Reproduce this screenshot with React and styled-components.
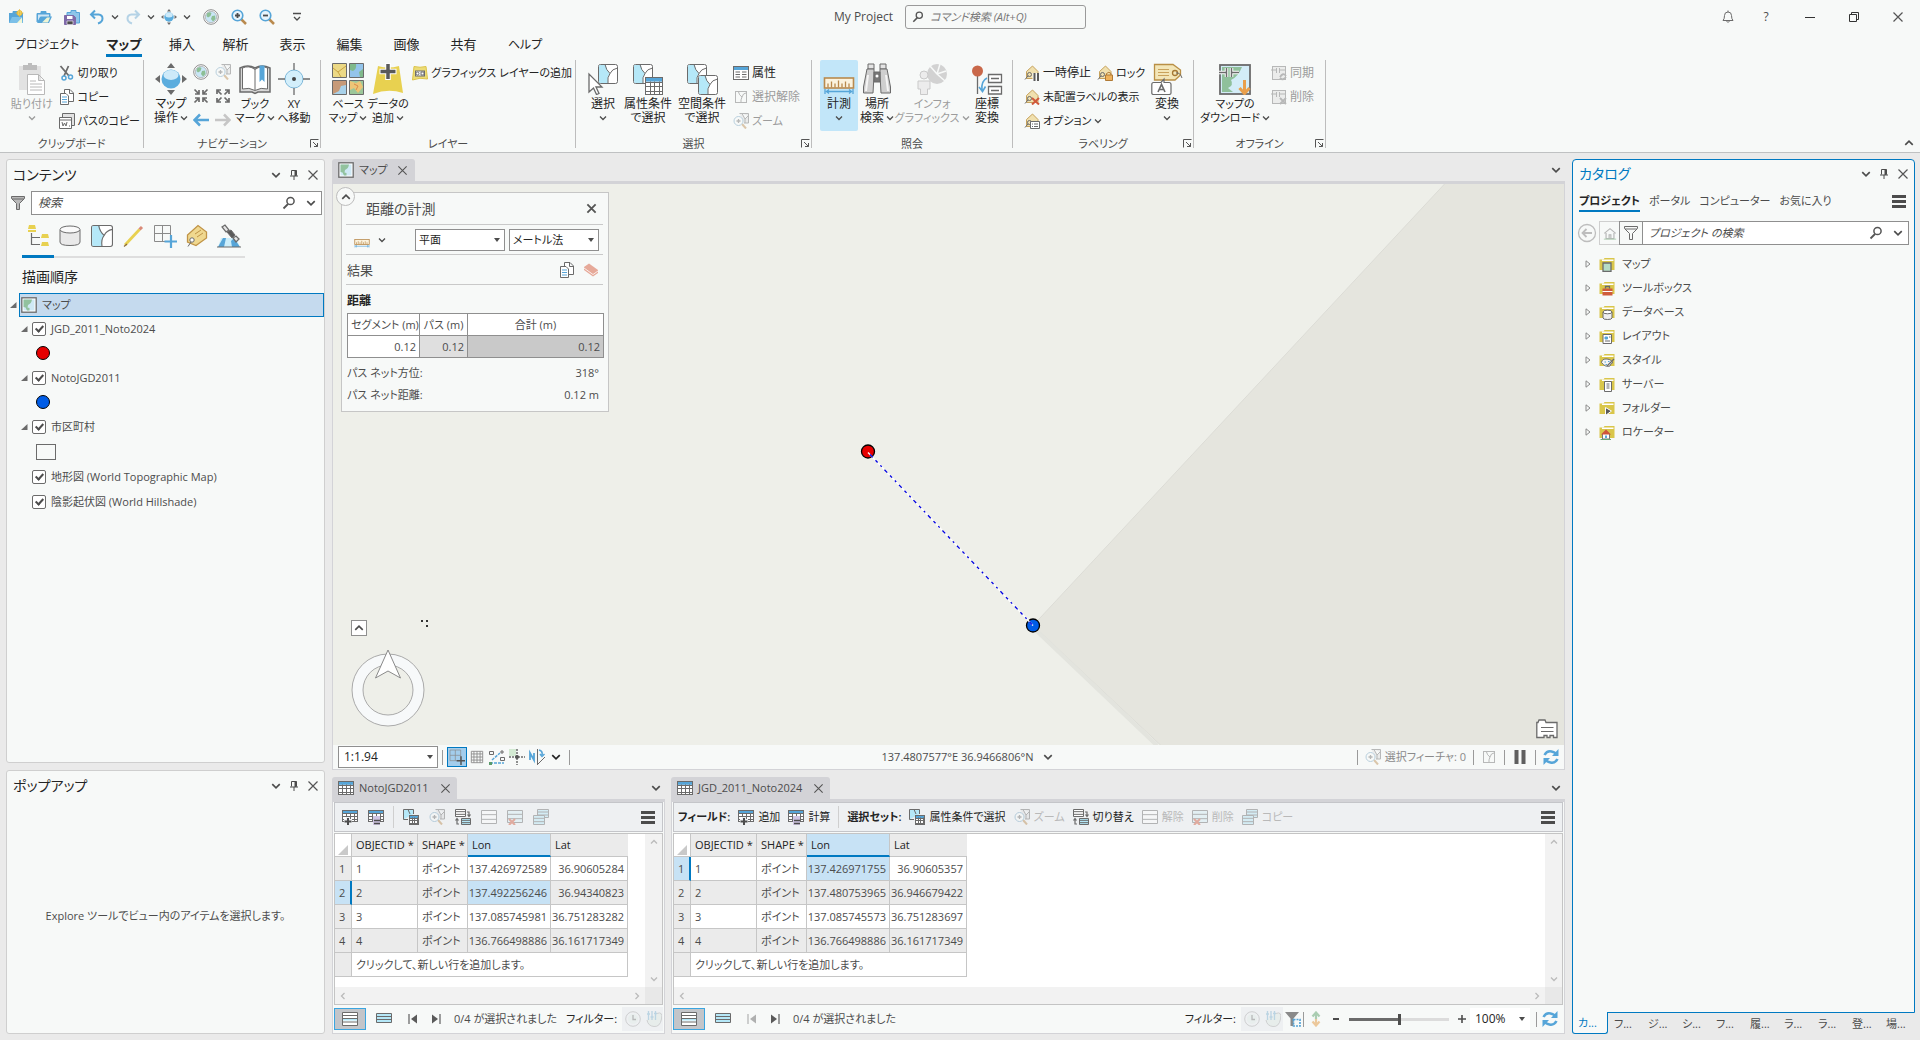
import React from "react";
import styled, { createGlobalStyle, css } from "styled-components";

const C = {
  face: "#f7f9f8",
  gutter: "#eaeaea",
  line: "#cfcfcf",
  tab: "#d3d3d7",
  text: "#4c4c4c",
  ink: "#242424",
  dim: "#9c9c9c",
  accent: "#0079c1",
  gray: "#6b6b6b",
  blue: "#56a5d8",
  cyan: "#b5e8f8",
  yellow: "#e8d150",
  tan: "#b98a4e",
};

const Global = createGlobalStyle`
  *, *::before, *::after { box-sizing: border-box; }
  body { margin: 0; background: ${C.gutter}; }
  body, button, input, select {
    font-family: "Open Sans", "Noto Sans CJK JP", sans-serif;
    font-size: 12px;
    line-height: 16px;
    font-feature-settings: "palt";
    color: ${C.text};
  }
  button { border: 0; background: none; padding: 0; white-space: nowrap; }
  h2, h3 { margin: 0; font-weight: 400; }
`;

/* ---------- icons ---------- */

const Svg = styled.svg`
  display: block;
  flex: none;
  fill: none;
  stroke: ${(p) => p.$c || C.gray};
  stroke-width: 1;
  opacity: ${(p) => (p.$dim ? 0.45 : 1)};
`;
const Ic = ({ s = 16, v = 16, c, dim, children }) => (
  <Svg width={s} height={s} viewBox={`0 0 ${v} ${v}`} $c={c} $dim={dim} aria-hidden="true">
    {children}
  </Svg>
);

const Chevron = ({ s = 8, c = "#4c4c4c", up }) => (
  <Ic s={s} v={8} c={c}>
    <path d={up ? "M1 5.5 4 2.5 7 5.5" : "M1 2.5 4 5.5 7 2.5"} strokeWidth="1.3" />
  </Ic>
);
const CloseX = ({ s = 12, w = 1.2 }) => (
  <Ic s={s} v={12} c="#555">
    <path d="M1.5 1.5 10.5 10.5M10.5 1.5 1.5 10.5" strokeWidth={w} />
  </Ic>
);
const Pin = () => (
  <Ic s={12} v={12} c="#4c4c4c">
    <path d="M3.5 6.5V1.5H8.5V6.5M2 7H10M6 7V11" />
    <path d="M7.5 1.5V7" strokeWidth="2" />
  </Ic>
);
const Lens = ({ s = 14 }) => (
  <Ic s={s} v={14} c="#555">
    <circle cx="8.5" cy="5" r="3.6" strokeWidth="1.5" />
    <path d="M6 8 1.5 12.5" strokeWidth="1.8" />
  </Ic>
);
const Burger = () => (
  <Ic s={16} c="#4c4c4c">
    <path d="M1 3.5H15M1 8.5H15M1 13.5H15" strokeWidth="3" />
  </Ic>
);
const Funnel = ({ hollow }) => (
  <Ic>
    <path d="M1.5 1.5H14.5V3.5L9.5 8.5V14.5H6.5V8.5L1.5 3.5Z" fill={hollow ? "none" : "#b9b9b9"} />
    <path d="M2 4H14" />
  </Ic>
);
const FolderNew = () => (
  <Ic>
    <path d="M1 14V4H5V2.5H10V4H15V14Z" fill={C.blue} stroke="none" />
    <path d="M5 2.5H10V4H5Z" stroke={C.blue} />
    <path d="M1 14 4 8H14L15 14Z" fill="#7cc0e8" stroke="none" />
    <path d="M9 14 14 8.500V14Z" fill="#f2f7d5" stroke="none" />
    <circle cx="11.500" cy="4" r="2.500" fill="#f5d76a" stroke="#e3b93c" />
    <path d="M11.500 0V8M7.500 4H15.500" stroke="#e3b93c" strokeWidth=".7" />
  </Ic>
);
const FolderOpen = () => (
  <Ic>
    <path d="M1 13V4.500H5V2.500H10V4.500H14V8" fill={C.blue} stroke={C.blue} />
    <path d="M2 5.500H13V8H4L2 12Z" fill="#cfe6f5" stroke="none" />
    <path d="M1 14 4.500 7.500H16L13 14Z" fill={C.blue} stroke="none" />
    <path d="M6 13.500 11 8.500H14L12 13.500Z" fill="#eef5d5" stroke="none" />
  </Ic>
);
const SaveIcon = () => (
  <Ic>
    <path d="M3 6V3.500H7V1.500H12V3.500H15.500V14H12" fill="#8ec6ea" stroke={C.blue} />
    <path d="M.5 6.500H9.500L11.500 8.500V15.500H.5Z" fill="#7f6aa8" stroke="#7f6aa8" />
    <path d="M3 7H8.500V10H3Z" fill="#fff" stroke="none" />
    <path d="M3 12H9V15.500H3Z" fill="#4c4c4c" stroke="#fff" strokeWidth=".6" />
  </Ic>
);
const Undo = ({ flip, dim }) => (
  <Ic c={flip ? "#b5d3e6" : C.blue} dim={dim}>
    <g transform={flip ? "translate(16 0) scale(-1 1)" : undefined}>
      <path d="M6 1.500 2 5.500 6 9.500M2.500 5.500H9.500Q13.500 6 13.500 9.500T9 14.500" strokeWidth="2" />
    </g>
  </Ic>
);
const PanIcon = ({ s = 16 }) => (
  <Ic s={s} v={32}>
    <path d="M16 0 20 5H12ZM16 32 20 27H12ZM0 16 5 12V20ZM32 16 27 12V20Z" fill="#6b6b6b" stroke="none" />
    <circle cx="16" cy="16" r="9.500" fill="#5badde" stroke="none" />
    <ellipse cx="16" cy="12" rx="7.500" ry="5" fill="#cdeaf9" stroke="none" />
  </Ic>
);
const Globe = ({ s = 16 }) => (
  <Ic s={s}>
    <circle cx="8" cy="8" r="7.300" fill="#fff" stroke="#8d8d8d" />
    <circle cx="8" cy="8" r="5.700" fill="#c9e6f6" stroke="#9a9a9a" strokeWidth=".6" />
    <path d="M4 4.500Q6.500 2.500 8.500 4L7.500 7 5 8.500 3.500 7ZM9 7 12 6.500 12.500 10 10 12.500 8 10Z" fill="#8dbf95" stroke="none" />
  </Ic>
);
const Mag = ({ minus }) => (
  <Ic>
    <path d="M10 10 15 15" stroke={C.tan} strokeWidth="2.500" />
    <circle cx="6.500" cy="6.500" r="5.300" fill="#e7f4fc" stroke={C.blue} strokeWidth="1.600" />
    <path d={minus ? "M4 6.500H9" : "M4 6.500H9M6.500 4V9"} stroke="#4c4c4c" strokeWidth="1.800" />
  </Ic>
);
const Customize = () => (
  <Ic s={12} v={12} c="#4c4c4c">
    <path d="M2 2.500H10M3 6 6 9 9 6" strokeWidth="1.300" />
  </Ic>
);
const Bell = () => (
  <Ic>
    <path d="M3 11.500Q4.500 10 4.500 6.500Q4.500 3 8 3T11.500 6.500Q11.500 10 13 11.500ZM6.500 12Q8 15 9.500 12M8 1.500V3" />
  </Ic>
);
const Minimize = () => (
  <Ic s={12} v={12} c="#333">
    <path d="M1 6.500H11" />
  </Ic>
);
const Restore = () => (
  <Ic s={12} v={12} c="#333">
    <path d="M1.500 3.500H8.500V10.500H1.500ZM3.500 3V1.500H10.500V8.500H9" />
  </Ic>
);
const Paste = () => (
  <Ic s={32} v={32} c="#b8b8b8">
    <path d="M3 3H25V27H3Z" fill="#e2e2e2" stroke="none" />
    <path d="M7 2H21V7H7Z" fill="#bdbdbd" stroke="none" />
    <path d="M12 0H16V3H12Z" fill="#bdbdbd" stroke="none" />
    <path d="M11.500 11.500H22.500L28.500 17.500V31.500H11.500ZM22.500 11.500V17.500H28.500M14 18H20M14 21H26M14 24H26M14 27H26" fill="#fff" />
  </Ic>
);
const Cut = () => (
  <Ic>
    <path d="M1.500 1 10 11M9.500 1 5 11" strokeWidth="1.800" />
    <circle cx="5" cy="13" r="2" stroke={C.blue} strokeWidth="1.500" />
    <circle cx="11.500" cy="12" r="2" stroke={C.blue} strokeWidth="1.500" />
  </Ic>
);
const Copy = () => (
  <Ic>
    <path d="M5.500.5H11L14.500 4V12.500H5.500ZM10.500.5V4.500H14.500" fill="#fff" />
    <path d="M1.500 4.500H7L9.500 7V15.500H1.500Z" fill="#fff" />
    <path d="M3 8H8M3 10.500H8M3 13H8" stroke={C.blue} />
  </Ic>
);
const PathCopy = () => (
  <Ic>
    <path d="M3.500.5H15.500V12.500H3.500Z" fill="#e2e2e2" />
    <path d="M.5 4.500H12.500V15.500H.5ZM.5 7H12.500" fill="#fff" />
    <path d="M3 9 4 13 5.500 10 7 13 8 9M10 13H11" />
  </Ic>
);
const ZoomSel = ({ dim = true }) => (
  <Ic dim={dim}>
    <path d="M6.500.5H15.500V10H11M9 .5 12 6 15 3M12 6V10" fill="#dcdcdc" />
    <path d="M9 11 13 15.500" stroke={C.tan} strokeWidth="2" />
    <circle cx="5.500" cy="8" r="4.500" fill="#f7f9f8" stroke="#6f9fbe" />
    <path d="M3.500 8H7.500M5.500 6V10" strokeWidth="1.300" />
  </Ic>
);
const ArrowsIn = ({ out }) => (
  <Ic c="#6b6b6b">
    <path
      strokeWidth="1.700"
      d={
        out
          ? "M2 6V2H6M2 2 6.500 6.500M10 2H14V6M14 2 9.500 6.500M2 10V14H6M2 14 6.500 9.500M14 10V14H10M14 14 9.500 9.500"
          : "M6 2V6H2M6 6 1.500 1.500M10 2V6H14M10 6 14.500 1.500M6 14V10H2M6 10 1.500 14.500M10 14V10H14M10 10 14.500 14.500"
      }
    />
  </Ic>
);
const Arrow = ({ fwd }) => (
  <Ic c={fwd ? "#c6c6c6" : C.blue}>
    <path d={fwd ? "M0 8H14M9 2.500 14.500 8 9 13.500" : "M16 8H2M7 2.500 1.500 8 7 13.500"} strokeWidth="2.500" />
  </Ic>
);
const Book = () => (
  <Ic s={32} v={32}>
    <path d="M1 29V5Q9 1 16 5Q23 1 31 5V29H19L16 30.500 13 29Z" fill="#d8d8d8" strokeWidth="1.500" />
    <path d="M3.500 26V5Q10 2 16 6.500Q22 2 28.500 5V26Q22 24 16 27.500Q10 24 3.500 26ZM16 6.500V27" fill="#fff" />
    <path d="M20.500 2.500H25.500V19L23 16.500 20.500 19Z" fill={C.blue} stroke="none" />
  </Ic>
);
const XYIcon = () => (
  <Ic s={32} v={32}>
    <circle cx="16" cy="16" r="9" fill="#d3effb" stroke="#7db8da" />
    <path d="M16 0V7M16 25V32M0 16H7M25 16H32" strokeWidth="1.300" />
    <circle cx="16" cy="16" r="2" fill="#444" stroke="none" />
  </Ic>
);
const Basemap = () => (
  <Ic s={32} v={32}>
    <path d="M.5.500H14.500V14.500H.5Z" fill="#ecd985" />
    <path d="M1 5 6 9 14 3M6 9 9 14" stroke="#c9a343" />
    <path d="M17.500.500H31.500V14.500H17.500Z" fill="#93c4ea" />
    <path d="M18 1H24Q25 6 21 8L18 7ZM31 6 27 9 28 14H31Z" fill="#7fb98b" stroke="none" />
    <path d="M.5 17.500H14.500V31.500H.5Z" fill="#c79a78" />
    <path d="M14 22 9 23 7 28 1 31H14Z" fill="#a9d2ea" stroke="none" />
    <path d="M17.500 17.500H31.500V31.500H17.500Z" fill="#9cc79a" />
    <path d="M18 18 24 20 28 18 31 24 26 30 22 25 18 27Z" fill="#ecc577" stroke="none" />
    <path d="M22 21 26 23 24 27" stroke="#d98a4a" />
  </Ic>
);
const AddData = () => (
  <Ic s={32} v={32}>
    <path d="M6 3Q16 6 27 3L31 30Q16 25 1 31Z" fill={C.yellow} stroke="none" />
    <path d="M16 0V17M7.500 8.500H24.500" stroke="#fff" strokeWidth="5.500" />
    <path d="M16 1V16M8.500 8.500H23.500" stroke="#5a5a5a" strokeWidth="3.500" />
  </Ic>
);
const Graphics = () => (
  <Ic>
    <path d="M2 1.500Q8 3 14 1.500L15.500 14Q8 12 .5 15Z" fill="#ecdc76" stroke="#dcc44a" />
    <rect x="3.500" y="6" width="9" height="5" fill="#fff" />
    <circle cx="5.500" cy="8.500" r="1.500" />
    <path d="M9 7H12V10H9Z" />
  </Ic>
);
const mapPiece = (x, y) => (
  <g transform={`translate(${x} ${y})`}>
    <rect x=".5" y=".5" width="19" height="19" rx="2" fill="#fff" />
    <path d="M2 1H8Q8 6 12 9.500Q9 13 10 19H2Q1 19 1 17V2Q1 1 2 1Z" fill={C.cyan} stroke="none" />
    <path d="M7 .5Q8 6 12 9.500Q9 13 10 19.500M12 9.500Q14 5 19.500 4" />
  </g>
);
const Select1 = () => (
  <Ic s={32} v={32}>
    {mapPiece(11, 1)}
    <path d="M2 11V29L6.500 25 9.500 31.500 12 30.500 9 24H15Z" fill="#fff" strokeWidth="1.300" />
  </Ic>
);
const tableShape = (x, y, w, h) => (
  <g transform={`translate(${x} ${y})`}>
    <rect x=".5" y=".5" width={w - 1} height={h - 1} fill="#fff" />
    <rect x="1" y="1" width={w - 2} height={h / 5} fill={C.blue} stroke="none" />
    <path
      d={`M1 ${Math.round(h * 0.25)}.5H${w - 1}M1 ${Math.round(h * 0.5)}.5H${w - 1}M1 ${Math.round(h * 0.75)}.5H${w - 1}M${Math.round(w * 0.25)}.5 ${h / 4}V${h}M${Math.round(w * 0.5)}.5 ${h / 4}V${h}M${Math.round(w * 0.75)}.5 ${h / 4}V${h}`}
    />
  </g>
);
const SelectAttr = () => (
  <Ic s={32} v={32}>
    {mapPiece(1, 1)}
    {tableShape(13, 14, 18, 18)}
  </Ic>
);
const SelectLoc = () => (
  <Ic s={32} v={32}>
    {mapPiece(1, 1)}
    {mapPiece(12, 12)}
  </Ic>
);
const Attributes = () => (
  <Ic>
    <rect x=".5" y="1.500" width="15" height="13" fill="#fff" />
    <path d="M1 3.500H15" stroke={C.blue} strokeWidth="3" />
    <path d="M2.500 7H7M2.500 9.500H7M2.500 12H7M9 7H13.500M9 9.500H13.500M9 12H13.500" />
  </Ic>
);
const ClearSel = () => (
  <Ic dim>
    <rect x="2.500" y="2.500" width="11" height="11" />
    <path d="M5.500 3Q6 6 9 8Q7.500 11 8 13.500M9 8 10.500 5 13 4" />
  </Ic>
);
const Ruler = ({ s = 32 }) => (
  <Ic s={s} v={32}>
    <rect x="1.500" y="15" width="29" height="10" fill="#fbf3df" stroke={C.tan} strokeWidth="1.600" />
    <path d="M5 20.500V24.500M8.500 18.500V24.500M12 20.500V24.500M15.500 17.500V24.500M19 20.500V24.500M22.500 18.500V24.500M26 20.500V24.500" stroke={C.tan} strokeWidth="1.300" />
    <path d="M2 26V31M30 26V31M3 28.500H29M6 26.500 3.500 28.500 6 30.500M26 26.500 28.500 28.500 26 30.500" stroke={C.blue} strokeWidth="1.300" />
  </Ic>
);
const Binoculars = () => (
  <Ic s={32} v={32}>
    <path d="M7 1H13V6H7ZM19 1H25V6H19Z" fill="#e4e4e4" />
    <path d="M6 6H13V12L12 30H2.500V24Z" fill="#cfcfcf" />
    <path d="M26 6H19V12L20 30H29.500V24Z" fill="#cfcfcf" />
    <path d="M13 9H19V19H13Z" fill="#777" />
    <path d="M7 12 5 28M25 12 27 28" stroke="#f5f5f5" strokeWidth="2" />
    <circle cx="16" cy="13" r="1.500" fill="#fff" stroke="none" />
  </Ic>
);
const Info = () => (
  <Ic s={32} v={32} c="#c9c9c9">
    <circle cx="21" cy="11" r="10" fill="#d2d2d2" stroke="none" />
    <path d="M21 11 14 3M21 11 24 1M21 11 30 8M21 11 29 18" stroke="#f7f9f8" strokeWidth="1.500" />
    <circle cx="8" cy="12" r="4" fill="#ececec" />
    <path d="M2 18H14V26H11.500V31.500H4.500V26H2Z" fill="#ececec" />
  </Ic>
);
const CoordConv = () => (
  <Ic s={32} v={32}>
    <path d="M6.500 12V31" strokeWidth="1.300" />
    <circle cx="6.500" cy="8" r="5.500" fill="#c9684a" stroke="none" />
    <path d="M17.500 11.500H30.500V19.500H17.500ZM17.500 23.500H30.500V31H17.500Z" fill="#fff" strokeWidth="1.300" />
    <path d="M20 15.500H28M20 27.500H28" strokeWidth="1.500" />
    <path d="M16 15Q10 18 11 27M8 24 11.500 28.500 14.500 23.500" stroke={C.blue} strokeWidth="1.600" />
  </Ic>
);
const tagShape = (
  <>
    <path d="M2.500 13.500V6.500L8.500 1 14 6.500V13.500Z" fill="#f0e0ae" stroke="#c6a25c" />
    <circle cx="5.500" cy="9.500" r="2" stroke={C.gray} />
    <path d="M4 11 1 14.500" />
  </>
);
const TagPause = () => (
  <Ic>
    {tagShape}
    <path d="M10.500 8V16M14 8V16" stroke="#f7f9f8" strokeWidth="4" />
    <path d="M10.500 8V16M14 8V16" stroke="#5a5a5a" strokeWidth="2" />
  </Ic>
);
const TagLock = () => (
  <Ic>
    {tagShape}
    <path d="M9.500 10V8.500Q12 6 14 8.500V10" stroke="#b07a35" />
    <path d="M8.500 10H15.500V15.500H8.500Z" fill="#efb25b" stroke="#b07a35" />
  </Ic>
);
const TagX = () => (
  <Ic>
    {tagShape}
    <path d="M8 9 15 15.500M15 9 8 15.500" stroke="#d05a3c" strokeWidth="2" />
  </Ic>
);
const TagOpts = () => (
  <Ic>
    {tagShape}
    <path d="M6.500 8.500H15.500V15.500H6.500Z" fill="#fff" />
    <path d="M8 11H9M10 11H14M8 13.500H9M10 13.500H14" />
  </Ic>
);
const ConvertLabel = () => (
  <Ic s={32} v={32}>
    <path d="M3.500 1.500H22L29.500 7V12L24 17H3.500Z" fill="#f3e6b8" stroke="#b98f45" strokeWidth="1.300" />
    <path d="M7 6.500H18M7 9.500H18M7 12.500H18" stroke="#c9a25c" />
    <circle cx="24" cy="10" r="2.500" stroke="#a57834" strokeWidth="1.300" />
    <path d="M25 10Q29 9 31 15" />
    <path d="M2.500 19.500H10L13 16V19.500H18Q20 19.500 20 21.500V30Q20 31.500 18 31.500H2.500Q.8 31.500.8 30V21.500Q.8 19.500 2.500 19.500Z" fill="#fff" strokeWidth="1.200" />
    <path d="M7 29 10.500 21.500 14 29M8.500 26.500H12.500" strokeWidth="1.600" />
  </Ic>
);
const Download = () => (
  <Ic s={32} v={32}>
    <rect x="1" y="2" width="30" height="29" fill="#d3ecf7" strokeWidth="1.800" />
    <path d="M3 4H23Q19 14 12 17Q15 22 9 25L14 29H3Z" fill="#8fc09b" stroke="none" />
    <path d="M0 9.500H7M7.500 5V14M12.500 5V14M13 9.500H20" stroke="#fff" strokeWidth="3.500" />
    <path d="M0 9.500H7M7.500 5V14M12.500 5V14M13 9.500H20" strokeWidth="1.500" />
    <path d="M25.500 17V30M20.500 25 25.500 30.500 30.500 25" stroke="#e99f4a" strokeWidth="3" />
  </Ic>
);
const SyncIcon = ({ x }) => (
  <Ic dim>
    <rect x="1.500" y="1.500" width="13" height="13" fill="#ddd" />
    <path d="M0 5H5M5.500 3V8M8.500 3V8M9 5H14" />
    <path d={x ? "M9 9 15 15M15 9 9 15" : "M9 12Q12 7 15 11M15 12Q12 16 9 13"} strokeWidth="1.800" />
  </Ic>
);
const Launcher = () => (
  <Ic s={9} v={9} c="#555">
    <path d="M.5 8.500V.5H8.500M3 3 7.500 7.500M7.500 4V7.500H4" />
  </Ic>
);
const MapIcon = () => (
  <Ic>
    <rect x=".8" y=".8" width="14.400" height="14.400" fill="#fff" strokeWidth="1.300" />
    <path d="M2.500 2.500H13.500V13.500H2.500Z" fill="#cfe9f5" stroke="none" />
    <path d="M2.500 2.500H11Q10.500 6.500 7 8L6.500 10.500 8.500 11V13.500H6L4.500 10.500 2.500 10Z" fill="#92c29e" stroke="none" />
  </Ic>
);
const TableIcon = () => <Ic>{tableShape(0, 1, 16, 14)}</Ic>;
const DrawOrder = () => (
  <Ic s={24} v={24}>
    <path d="M3 1H9L10 5H2ZM2 6H10V8H2ZM16 10H22L23 14H15ZM16 18H22L23 22H15Z" fill={C.yellow} stroke="none" />
    <path d="M5.500 9V20.500H14M5.500 13.500H14" strokeWidth="1.200" />
  </Ic>
);
const Cylinder = () => (
  <Ic s={24} v={24}>
    <path d="M2 6V18Q2 21.500 12 21.500T22 18V6" fill="#e9e9e9" />
    <ellipse cx="12" cy="5.500" rx="10" ry="3.500" fill="#fafafa" />
  </Ic>
);
const SelTab = () => (
  <Ic s={22} v={20}>
    {mapPiece(0, 0)}
  </Ic>
);
const Pencil = () => (
  <Ic s={24} v={24}>
    <path d="M3 21 17.500 5.500" stroke={C.yellow} strokeWidth="2.800" />
    <path d="M17.500 5.500 20 3" stroke="#d98a78" strokeWidth="3" />
    <path d="M2 22.500 5 20" stroke="#8a6a3c" strokeWidth="1.200" />
  </Ic>
);
const GridPlus = ({ s = 24, c = C.blue }) => (
  <Ic s={s} v={24}>
    <path d="M1.500 1.500H17.500V17.500H1.500ZM9.500 1.500V17.500M1.500 9.500H17.500" stroke="#8a8a8a" />
    <path d="M18 11V24M11.500 17.500H24" stroke={c} strokeWidth="2.200" />
  </Ic>
);
const Tag = () => (
  <Ic s={24} v={24}>
    <path d="M2.500 18V11L13 1.500 21.500 8V14L11 21.500Z" fill="#f0d88f" stroke="#c09447" strokeWidth="1.300" />
    <path d="M10 10 16 6M12 13 18 9" stroke="#c09447" />
    <circle cx="7" cy="16" r="2.200" fill="#fff" />
    <path d="M6 18 3 22.500" />
  </Ic>
);
const Satellite = () => (
  <Ic s={24} v={24}>
    <path d="M4 14H19L23 23H1Z" fill="#cdeefa" stroke="none" />
    <path d="M1 23 6 14H9L7 23ZM15 23 14 17 17 14 23 23Z" fill={C.blue} stroke="none" />
    <path d="M0 23H24" />
    <path d="M5 3 8 1 12 6 9 8ZM16 14 19 12 22 15 19 18Z" fill="#e6e6e6" strokeWidth="1.300" />
    <path d="M10 8 14 6 18 11 15 14Z" fill="#5a5a5a" />
  </Ic>
);
const Expand = ({ open }) => (
  <Ic s={8} v={8} c={open ? "none" : "#8a8a8a"}>
    {open ? <path d="M7.500 1V7H1Z" fill="#6b6b6b" /> : <path d="M2 .8 6 4 2 7.200Z" />}
  </Ic>
);
const Eraser = () => (
  <Ic>
    <path d="M1 5 6 1.500 15 8V11L10 14.500 1 8Z" fill="#e6a999" stroke="none" />
    <path d="M1 6 10 12.500 15 9" stroke="#fff" strokeWidth=".8" />
  </Ic>
);
const GridIcon = () => (
  <Ic s={14}>
    <path d="M1.500 1.500H14.500V14.500H1.500ZM4.500 1.500V14.500M8 1.500V14.500M11.500 1.500V14.500M1.500 4.500H14.500M1.500 8H14.500M1.500 11.500H14.500" stroke="#8a8a8a" />
  </Ic>
);
const CogoIcon = () => (
  <Ic>
    <path d="M.5 2.500H4.500V5.500H.5ZM11.500 8.500H15.500V11.500H11.500ZM11 3H15M13 1V5" />
    <path d="M1 14H15M3 11 11 4" stroke={C.blue} strokeWidth="1.500" strokeDasharray="3 1" />
    <path d="M0 13H3V16H0Z" fill="#5a9a6a" stroke="none" />
  </Ic>
);
const SnapIcon = () => (
  <Ic>
    <path d="M0 0H7V7H0Z" fill="#d3ead3" stroke="none" />
    <path d="M8 0V16M0 8H16" strokeDasharray="2 1" strokeWidth="1.500" />
    <circle cx="8" cy="8" r="2" fill="#555" stroke="none" />
  </Ic>
);
const NorthIcon = () => (
  <Ic>
    <path d="M1 11V4L5 11V4" stroke={C.blue} strokeWidth="1.800" />
    <path d="M8.500 0V16M9 15 16 8" />
    <path d="M10 1Q14 2 13 6M11 5 13 7.500 15.500 5" stroke={C.blue} strokeWidth="1.500" />
  </Ic>
);
const Pause = () => (
  <Ic>
    <path d="M4.500 1V15M11.500 1V15" stroke="#5f5f5f" strokeWidth="4" />
  </Ic>
);
const Refresh = () => (
  <Ic c={C.blue}>
    <path d="M1.500 6Q4 1.500 8.500 2.500T13.500 6M14.500 10Q12 14.500 7.500 13.500T2.500 10" strokeWidth="2.500" />
    <path d="M15.500 0V7H9ZM.5 16V9H7Z" fill={C.blue} stroke="none" />
  </Ic>
);
const FieldAdd = () => (
  <Ic>
    {tableShape(0, 1, 16, 12)}
    <path d="M6 8V16M2 12H10" stroke="#eef0f2" strokeWidth="4" />
    <path d="M6 9V16M2.500 12.500H9.500" stroke="#4c4c4c" strokeWidth="2" />
  </Ic>
);
const FieldCalc = () => (
  <Ic>
    {tableShape(0, 1, 16, 12)}
    <path d="M5 7H12V16H5Z" fill="#cfc4e2" stroke="none" />
    <path d="M6 11.500H12M6 14.500H12" stroke="#4c4c4c" strokeWidth="1.500" />
  </Ic>
);
const SelByAttr = () => (
  <Ic>
    <path d="M.5 10.500V.5H10.500V5M5 .5 7 5" fill={C.cyan} />
    <path d="M.5 10.500H5" />
    {tableShape(6, 6, 10, 10)}
  </Ic>
);
const rowsShape = (x, y, w, h, fill) => (
  <g transform={`translate(${x} ${y})`}>
    <path d={`M.5.500H${w - 0.5}V${h - 0.5}H.5Z`} fill={fill || "#fff"} />
    <path d={`M.5 ${h / 3}H${w - 0.5}M.5 ${(h * 2) / 3}H${w - 0.5}`} />
  </g>
);
const Switch = () => (
  <Ic>
    {rowsShape(0, 0, 11, 8)}
    {rowsShape(6, 9, 10, 7, C.cyan)}
    <path d="M12 3H14V7M12.500 5.500 14 7.500 15.500 5.500M4 15H2V10M.5 11.500 2 9.500 3.500 11.500" strokeWidth="1.200" />
  </Ic>
);
const ClearRows = () => <Ic dim>{rowsShape(0, 1, 16, 14)}</Ic>;
const DeleteRows = () => (
  <Ic dim>
    {rowsShape(0, 1, 16, 13, "#d7eef6")}
    <path d="M2 10 8 16M8 10 2 16" stroke="#d0563a" strokeWidth="2" />
  </Ic>
);
const CopyRows = () => (
  <Ic dim>
    {rowsShape(4, 0, 12, 9, C.cyan)}
    {rowsShape(0, 6, 12, 10, C.cyan)}
  </Ic>
);
const ViewAll = () => (
  <Ic>
    <path d="M.5 1.500H15.500V14.500H.5Z" fill="#fff" />
    <path d="M1 7H15V9.500H1Z" fill={C.cyan} stroke="none" />
    <path d="M.5 4.500H15.500M.5 7.500H15.500M.5 11H15.500" />
  </Ic>
);
const ViewSel = () => (
  <Ic>
    <path d="M.5 2.500H15.500V11.500H.5ZM.5 5.500H15.500M.5 8.500H15.500" fill={C.cyan} />
  </Ic>
);
const Step = ({ end, dim }) => (
  <Ic s={12} v={12} dim={dim}>
    <path d={end ? "M2 1.500 8 6 2 10.500Z" : "M10 1.500 4 6 10 10.500Z"} fill="#5a5a5a" stroke="none" />
    <path d={end ? "M10 1V11" : "M2 1V11"} strokeWidth="1.300" />
  </Ic>
);
const ClockIcon = () => (
  <Ic dim c="#a9a9a9">
    <circle cx="8" cy="8" r="7.300" />
    <circle cx="8" cy="8" r="5" fill="#e2ece8" stroke="none" />
    <path d="M8 4V8.500H11" stroke="#777" strokeWidth="1.300" />
  </Ic>
);
const SlidersIcon = () => (
  <Ic dim c="#a9a9a9">
    <path d="M1 9Q2 15 8 15.500T15.500 8 11 2.500" fill="#e0ebe3" />
    <path d="M2.500 0V9M6 0V9M9.500 0V9M1 3H4M4.500 6H7.500M8 2.500H11" stroke="#7fb3d1" strokeWidth="1.300" />
  </Ic>
);
const FunnelSel = () => (
  <Ic>
    <path d="M0 1H14L8.500 7.500V15H5.500V7.500Z" fill="#8a8a8a" stroke="none" />
    <path d="M8.500 8.500H15V15H8.500Z" stroke={C.blue} strokeWidth="1.700" strokeDasharray="2 1" />
  </Ic>
);
const UpDown = () => (
  <Ic dim>
    <path d="M8 8V2M4.500 5.500 8 1.500 11.500 5.500" stroke="#4f9a5f" strokeWidth="2.200" />
    <path d="M8 8V14M4.500 10.500 8 14.500 11.500 10.500" stroke="#e08e2b" strokeWidth="2.200" />
  </Ic>
);
const folder = (extra) => (
  <Ic>
    <path d="M.5 3.500H4.500L5.500 2H15.500V14H.5Z" fill="#d9c64a" stroke="none" />
    <path d="M3 3.500H14.500V5H3Z" fill="#fff" stroke="none" />
    {extra}
  </Ic>
);
const FolderMap = () => folder(<path d="M4 7H12V15.500H4Z" fill="#b5dcc5" strokeWidth="1.300" />);
const FolderTool = () =>
  folder(
    <>
      <path d="M3.500 8.500H13.500V15.500H3.500Z" fill="#cf5c3c" stroke="none" />
      <path d="M6.500 8.500V6.500H10.500V8.500" strokeWidth="1.300" />
      <path d="M3.500 11.500H13.500" stroke="#fff" />
    </>
  );
const FolderDb = () =>
  folder(
    <>
      <path d="M4 8V14Q4 15.500 8.500 15.500T13 14V8" fill="#eee" />
      <ellipse cx="8.500" cy="8" rx="4.500" ry="1.800" fill="#fff" />
    </>
  );
const FolderLayout = () =>
  folder(
    <>
      <path d="M4 6.500H12.500V15.500H4Z" fill="#fff" />
      <path d="M6 9H8.500V11H6Z" fill={C.blue} stroke={C.blue} />
      <path d="M10 9H11.500M6 13H11" />
    </>
  );
const FolderStyle = () =>
  folder(
    <>
      <path d="M2.500 10.500Q3 6.500 8 7T13.500 11Q11 12 11 14 6 15.500 2.500 10.500Z" fill="#f4f4f4" />
      <path d="M5.500 10H7M9 9.500H10.500M6.500 12.500H8" stroke={C.blue} />
      <path d="M15 7 8 14" strokeWidth="1.300" />
    </>
  );
const FolderServer = () =>
  folder(
    <>
      <path d="M5.500 5.500H12.500V15.500H5.500Z" fill="#fff" />
      <path d="M7.500 8H10.500M7.500 10H10.500M7.500 12H10.500" />
    </>
  );
const FolderGo = () => folder(<path d="M6.500 7.500V15.500L12.500 11Z" fill="#5a5a5a" stroke="#fff" />);
const FolderLoc = () =>
  folder(
    <>
      <path d="M3.500 10V15H10.500V10L7 6.500Z" fill="#fff" stroke="#777" />
      <path d="M2 10.500 7 5.500 12 10.500Z" fill="#d0563a" stroke="none" />
      <path d="M6 11.500H8V14H6Z" fill={C.blue} stroke="none" />
      <path d="M1.500 15.500H12" stroke="#6aa873" />
    </>
  );
const BackCircle = () => (
  <Ic s={20} v={20} c="#bdbdbd">
    <circle cx="10" cy="10" r="8.500" strokeWidth="1.300" />
    <path d="M15 10H6M9.500 6 5.500 10 9.500 14" strokeWidth="1.800" />
  </Ic>
);
const HomeIcon = () => (
  <Ic s={14} c="#b5b5b5">
    <path d="M3.500 8V14.500H12.500V8M1.500 8.500 8 3 14.500 8.500M7 14V10H9V14" strokeWidth="1.300" />
    <path d="M1 15H15" stroke="#a9cfae" />
  </Ic>
);
const Bookmarked = () => (
  <Ic s={22} v={22}>
    <path d="M.8 17.500V4.500H2L3 2H9L10 4.500H21V19.500H17.500V17.500H14V19.500H11V17.500H8V19.500H.8Z" fill="#fff" strokeWidth="1.300" />
    <path d="M5 9.500H17.500M5 13.500H17.500" />
  </Ic>
);

/* ---------- title bar, tabs, ribbon ---------- */

const App_ = styled.div`
  min-height: 100vh;
  display: flex;
  flex-direction: column;
  background: ${C.gutter};
`;
const Header = styled.header`
  background: ${C.face};
  border-bottom: 1px solid #bfc1c2;
`;
const TitleBar = styled.div`
  height: 33px;
  display: grid;
  grid-template-columns: 1fr auto 1fr;
  align-items: center;
`;
const QuickAccess = styled.div`
  display: flex;
  align-items: center;
  gap: 12px;
  padding-left: 8px;
`;
const QuickItem = styled.span`
  display: flex;
  align-items: center;
  gap: 6px;
  margin-left: -3px;
`;
const IconButton = styled.button`
  flex: none;
  display: inline-flex;
  align-items: center;
  justify-content: center;
  min-width: ${(p) => (p.$w ? p.$w + "px" : "0")};
`;
const TitleCenter = styled.div`
  display: flex;
  align-items: center;
  gap: 12px;
`;
const CommandSearch = styled.label`
  display: flex;
  align-items: center;
  gap: 6px;
  width: 181px;
  height: 24px;
  padding: 0 6px;
  border: 1px solid #9a9a9a;
  border-radius: 3px;
`;
const BareInput = styled.input`
  flex: 1;
  min-width: 0;
  border: 0;
  padding: 0;
  background: none;
  outline: 0;
  font-size: ${(p) => p.$size || 12}px;
  &::placeholder {
    font-style: italic;
    color: ${(p) => p.$ph || "#4c4c4c"};
    opacity: 1;
  }
`;
const WindowButtons = styled.div`
  display: flex;
  justify-content: flex-end;
`;
const MenuTabs = styled.nav`
  display: flex;
  height: 27px;
  padding-left: 3px;
`;
const MenuTab = styled.button`
  width: ${(p) => p.$w}px;
  display: flex;
  justify-content: center;
  align-items: flex-start;
  font-size: ${(p) => (p.$kana ? 12 : 13)}px;
  line-height: 23px;
  color: ${C.ink};
  font-weight: ${(p) => (p.$on ? 600 : 400)};
  span {
    height: 24px;
    border-bottom: ${(p) => (p.$on ? `3px solid ${C.accent}` : "0")};
  }
`;
const Ribbon = styled.div`
  display: flex;
  height: 92px;
  padding-bottom: 4px;
`;
const Group = styled.section`
  width: ${(p) => p.$w}px;
  flex: none;
  display: flex;
  flex-direction: column;
  justify-content: space-between;
  border-right: 1px solid #bdbdbd;
`;
const GroupTools = styled.div`
  display: flex;
  align-items: flex-start;
  padding-left: 8px;
`;
const GroupFoot = styled.div`
  display: grid;
  grid-template-columns: 12px 1fr 12px;
  align-items: center;
  height: 9px;
  font-size: 11px;
  line-height: 9px;
  text-align: center;
`;
const Big = styled.button`
  width: ${(p) => p.$w}px;
  height: 71px;
  display: flex;
  flex-direction: column;
  align-items: center;
  gap: 2px;
  padding-top: 3px;
  color: ${C.ink};
  background: ${(p) => (p.$on ? "#c2e6f9" : "none")};
  border-radius: 2px;
  &:disabled { color: ${C.dim}; }
`;
const BigLine = styled.span`
  display: flex;
  align-items: center;
  justify-content: center;
  gap: 2px;
  height: 14px;
  line-height: 14px;
  font-size: ${(p) => (p.$s ? 11 : 12)}px;
`;
const BigText = styled.span`
  display: block;
`;
const SmallCol = styled.div`
  display: flex;
  flex-direction: column;
  padding-top: 1px;
  width: ${(p) => (p.$w ? p.$w + "px" : "auto")};
`;
const SmallRow = styled.div`
  display: flex;
`;
const Small = styled.button`
  display: flex;
  align-items: center;
  gap: 3px;
  height: 24px;
  padding: 0 3px;
  font-size: ${(p) => (p.$kana ? 11 : 12)}px;
  color: ${C.ink};
  &:disabled { color: ${C.dim}; }
`;
const NavGrid = styled.div`
  display: grid;
  grid-template-columns: 22px 22px;
  grid-auto-rows: 24px;
`;
const RibbonEnd = styled.div`
  flex: 1;
  display: flex;
  align-items: flex-end;
  justify-content: flex-end;
  padding-right: 6px;
`;

const BigTool = ({ icon, lines, chev, w, on, disabled, small }) => (
  <Big $w={w} $on={on} disabled={disabled}>
    {icon}
    <BigText>
      {lines.map((l, i) => (
        <BigLine key={i} $s={small}>
          {l}
          {chev && i === lines.length - 1 && <Chevron c={disabled ? "#9c9c9c" : "#4c4c4c"} />}
        </BigLine>
      ))}
    </BigText>
  </Big>
);
const RibbonGroup = ({ w, label, launch, children }) => (
  <Group $w={w}>
    <GroupTools>{children}</GroupTools>
    <GroupFoot>
      <span />
      <span>{label}</span>
      {launch && (
        <IconButton aria-label={label}>
          <Launcher />
        </IconButton>
      )}
    </GroupFoot>
  </Group>
);

const menus = [
  ["プロジェクト", 88, true],
  ["マップ", 66],
  ["挿入", 50],
  ["解析", 57],
  ["表示", 57],
  ["編集", 57],
  ["画像", 57],
  ["共有", 57],
  ["ヘルプ", 66, true],
];

const Top = () => (
  <Header>
    <TitleBar>
      <QuickAccess>
        <IconButton aria-label="新規"><FolderNew /></IconButton>
        <IconButton aria-label="開く"><FolderOpen /></IconButton>
        <IconButton aria-label="保存"><SaveIcon /></IconButton>
        <QuickItem>
          <IconButton aria-label="元に戻す"><Undo /></IconButton>
          <Chevron />
          <IconButton aria-label="やり直し"><Undo flip /></IconButton>
          <Chevron />
          <IconButton aria-label="マップ操作"><PanIcon /></IconButton>
          <Chevron />
        </QuickItem>
        <IconButton aria-label="全体表示"><Globe /></IconButton>
        <IconButton aria-label="拡大"><Mag /></IconButton>
        <IconButton aria-label="縮小"><Mag minus /></IconButton>
        <IconButton aria-label="カスタマイズ" $w={20}><Customize /></IconButton>
      </QuickAccess>
      <TitleCenter>
        <span>My Project</span>
        <CommandSearch>
          <Lens s={12} />
          <BareInput $size={11} $ph="#777" placeholder="コマンド検索 (Alt+Q)" aria-label="コマンド検索" />
        </CommandSearch>
      </TitleCenter>
      <WindowButtons>
        <IconButton $w={32} aria-label="通知"><Bell /></IconButton>
        <IconButton $w={44} aria-label="ヘルプ">?</IconButton>
        <IconButton $w={44} aria-label="最小化"><Minimize /></IconButton>
        <IconButton $w={44} aria-label="元のサイズ"><Restore /></IconButton>
        <IconButton $w={44} aria-label="閉じる"><CloseX /></IconButton>
      </WindowButtons>
    </TitleBar>
    <MenuTabs>
      {menus.map(([t, w, kana]) => (
        <MenuTab key={t} $w={w} $kana={kana} $on={t === "マップ"}>
          <span>{t}</span>
        </MenuTab>
      ))}
    </MenuTabs>
    <Ribbon>
      <RibbonGroup w={144} label="クリップボード">
        <BigTool w={48} icon={<Paste />} lines={["貼り付け", ""]} chev disabled small />
        <SmallCol>
          <Small $kana><Cut />切り取り</Small>
          <Small $kana><Copy />コピー</Small>
          <Small $kana><PathCopy />パスのコピー</Small>
        </SmallCol>
      </RibbonGroup>
      <RibbonGroup w={177} label="ナビゲーション" launch>
        <BigTool w={38} icon={<PanIcon s={32} />} lines={["マップ", "操作"]} chev />
        <NavGrid>
          <IconButton aria-label="全体表示"><Globe /></IconButton>
          <IconButton aria-label="選択にズーム" disabled><ZoomSel /></IconButton>
          <IconButton aria-label="固定拡大"><ArrowsIn /></IconButton>
          <IconButton aria-label="固定縮小"><ArrowsIn out /></IconButton>
          <IconButton aria-label="前へ"><Arrow /></IconButton>
          <IconButton aria-label="次へ" disabled><Arrow fwd /></IconButton>
        </NavGrid>
        <BigTool w={42} icon={<Book />} lines={["ブック", "マーク"]} chev small />
        <BigTool w={36} icon={<XYIcon />} lines={["XY", "へ移動"]} small />
      </RibbonGroup>
      <RibbonGroup w={255} label="レイヤー">
        <BigTool w={38} icon={<Basemap />} lines={["ベース", "マップ"]} chev small />
        <BigTool w={44} icon={<AddData />} lines={["データの", "追加"]} chev small />
        <SmallCol>
          <Small $kana><Graphics />グラフィックス レイヤーの追加</Small>
        </SmallCol>
      </RibbonGroup>
      <RibbonGroup w={236} label="選択" launch>
        <BigTool w={38} icon={<Select1 />} lines={["選択", ""]} chev />
        <BigTool w={52} icon={<SelectAttr />} lines={["属性条件", "で選択"]} />
        <BigTool w={56} icon={<SelectLoc />} lines={["空間条件", "で選択"]} />
        <SmallCol>
          <Small><Attributes />属性</Small>
          <Small disabled><ClearSel />選択解除</Small>
          <Small disabled $kana><ZoomSel />ズーム</Small>
        </SmallCol>
      </RibbonGroup>
      <RibbonGroup w={201} label="照会">
        <BigTool w={38} icon={<Ruler />} lines={["計測", ""]} chev on />
        <BigTool w={38} icon={<Binoculars />} lines={["場所", "検索"]} chev />
        <BigTool w={72} icon={<Info />} lines={["インフォ", "グラフィックス"]} chev disabled small />
        <BigTool w={38} icon={<CoordConv />} lines={["座標", "変換"]} />
      </RibbonGroup>
      <RibbonGroup w={181} label="ラベリング" launch>
        <SmallCol $w={123}>
          <SmallRow>
            <Small><TagPause />一時停止</Small>
            <Small $kana><TagLock />ロック</Small>
          </SmallRow>
          <Small $kana><TagX />未配置ラベルの表示</Small>
          <Small $kana><TagOpts />オプション <Chevron /></Small>
        </SmallCol>
        <BigTool w={46} icon={<ConvertLabel />} lines={["変換", ""]} chev />
      </RibbonGroup>
      <RibbonGroup w={132} label="オフライン" launch>
        <BigTool w={66} icon={<Download />} lines={["マップの", "ダウンロード"]} chev small />
        <SmallCol>
          <Small disabled><SyncIcon />同期</Small>
          <Small disabled><SyncIcon x />削除</Small>
        </SmallCol>
      </RibbonGroup>
      <RibbonEnd>
        <IconButton aria-label="リボンを折りたたむ"><Chevron s={10} up /></IconButton>
      </RibbonEnd>
    </Ribbon>
  </Header>
);

/* ---------- shared panel parts ---------- */

const Body = styled.main`
  flex: 1;
  display: grid;
  grid-template-columns: 319px minmax(0, 1fr) 343px;
  column-gap: 7px;
  padding: 6px 5px 6px 6px;
`;
const Column = styled.div`
  display: flex;
  flex-direction: column;
  gap: 7px;
  min-width: 0;
`;
const Panel = styled.section`
  display: flex;
  flex-direction: column;
  background: ${C.face};
  border: 1px solid ${(p) => (p.$active ? C.accent : C.line)};
  border-radius: ${(p) => (p.$active ? "4px 4px 0 0" : "3px")};
  ${(p) => (p.$h ? css`height: ${p.$h}px;` : css`flex: 1;`)}
`;
const PanelHead = styled.div`
  display: flex;
  align-items: center;
  height: ${(p) => (p.$active ? 30 : 31)}px;
  padding: 0 1px 2px 6px;
`;
const PanelTitle = styled.h2`
  flex: 1;
  font-size: 14px;
  line-height: 20px;
  color: ${(p) => (p.$active ? C.accent : C.ink)};
`;
const Heading = ({ title, active }) => (
  <PanelHead $active={active}>
    <PanelTitle $active={active}>{title}</PanelTitle>
    <IconButton $w={18} aria-label="メニュー"><Chevron s={10} /></IconButton>
    <IconButton $w={18} aria-label="自動的に隠す"><Pin /></IconButton>
    <IconButton $w={20} aria-label="閉じる"><CloseX /></IconButton>
  </PanelHead>
);
const SearchRow = styled.div`
  display: flex;
  align-items: center;
  height: 24px;
  gap: ${(p) => p.$gap || 0}px;
  padding: 0 ${(p) => p.$r || 2}px 0 ${(p) => p.$l || 4}px;
`;
const SearchBox = styled.label`
  flex: 1;
  display: flex;
  align-items: center;
  gap: 10px;
  height: 24px;
  padding: 0 5px 0 6px;
  border: 1px solid #8f8f8f;
  background: #fff;
`;

/* ---------- contents ---------- */

const Strip = styled.div`
  display: flex;
  margin: 7px 79px 0 15px;
  border-bottom: 2px solid #dedede;
`;
const StripButton = styled.button`
  width: 32px;
  height: 36px;
  display: flex;
  justify-content: center;
  align-items: center;
  padding-bottom: 5px;
  margin-bottom: -2px;
  border-bottom: 3px solid ${(p) => (p.$on ? C.accent : "transparent")};
`;
const SubHead = styled.h3`
  padding: 10px 0 7px 15px;
  font-size: 14px;
  line-height: 18px;
  color: ${C.ink};
`;
const Tree = styled.ul`
  list-style: none;
  margin: 0;
  padding: 0;
`;
const MapRow = styled.li`
  display: flex;
  align-items: center;
  gap: 2px;
  padding: 0 0 0 2px;
`;
const MapLabel = styled.div`
  flex: 1;
  display: flex;
  align-items: center;
  gap: 5px;
  height: 24px;
  padding-left: 1px;
  font-size: 11px;
  background: #c5daee;
  border: 1px solid ${C.accent};
`;
const Layer = styled.li`
  display: flex;
  align-items: center;
  height: ${(p) => (p.$last ? 25 : 24)}px;
  padding-left: 13px;
`;
const ExpandSlot = styled.span`
  width: 12px;
`;
const LayerLabel = styled.label`
  display: flex;
  align-items: center;
  gap: 5px;
  font-size: 11px;
`;
const Check = styled.input.attrs({ type: "checkbox" })`
  appearance: none;
  width: 14px;
  height: 14px;
  margin: 0;
  display: grid;
  place-items: center;
  border: 1px solid #6b6b6b;
  border-radius: 2px;
  background: #fff;
  &:checked::after {
    content: "";
    width: 5px;
    height: 8px;
    margin-bottom: 2px;
    border: solid #4c4c4c;
    border-width: 0 2px 2px 0;
    transform: rotate(42deg);
  }
`;
const SymbolRow = styled.li`
  height: 25px;
  padding: 5px 0 0 29px;
`;
const Dot = styled.span`
  display: block;
  width: 14px;
  height: 14px;
  border-radius: 50%;
  border: 1px solid #000;
  background: ${(p) => p.$c};
`;
const Patch = styled.span`
  display: block;
  width: 20px;
  height: 16px;
  border: 1px solid #6b6b6b;
`;

const layers = [
  { name: "JGD_2011_Noto2024", sym: <Dot $c="#e60000" /> },
  { name: "NotoJGD2011", sym: <Dot $c="#005ce6" /> },
  { name: "市区町村", sym: <Patch /> },
  { name: "地形図 (World Topographic Map)" },
  { name: "陰影起伏図 (World Hillshade)" },
];

const Contents = () => (
  <Panel>
    <Heading title="コンテンツ" />
    <SearchRow $gap={5} $l={3}>
      <Funnel />
      <SearchBox>
        <BareInput placeholder="検索" aria-label="コンテンツの検索" />
        <Lens />
        <Chevron s={10} />
      </SearchBox>
    </SearchRow>
    <Strip>
      {[<DrawOrder />, <Cylinder />, <SelTab />, <Pencil />, <GridPlus />, <Tag />, <Satellite />].map((ic, i) => (
        <StripButton key={i} $on={i === 0} aria-label={"リスト " + (i + 1)}>{ic}</StripButton>
      ))}
    </Strip>
    <SubHead>描画順序</SubHead>
    <Tree>
      <MapRow>
        <Expand open />
        <MapLabel><MapIcon />マップ</MapLabel>
      </MapRow>
      {layers.map((l) => (
        <React.Fragment key={l.name}>
          <Layer $last={!l.sym}>
            <ExpandSlot>{l.sym && <Expand open />}</ExpandSlot>
            <LayerLabel>
              <Check defaultChecked />
              {l.name}
            </LayerLabel>
          </Layer>
          {l.sym && <SymbolRow>{l.sym}</SymbolRow>}
        </React.Fragment>
      ))}
    </Tree>
  </Panel>
);

const PopupMessage = styled.p`
  margin: auto;
  padding-bottom: 4px;
  font-size: 11px;
`;

/* ---------- map view ---------- */

const TabStrip = styled.div`
  display: flex;
  align-items: center;
  justify-content: space-between;
  height: 22px;
  padding-right: 4px;
`;
const DocTab = styled.div`
  display: flex;
  align-items: center;
  gap: 5px;
  height: 22px;
  padding: 0 2px 0 6px;
  background: ${C.tab};
  border-radius: 3px 3px 0 0;
`;
const DocName = styled.span`
  min-width: ${(p) => p.$w || 0}px;
  font-size: 11px;
`;
const View = styled.section`
  flex: 1;
  display: flex;
  flex-direction: column;
`;
const MapFrame = styled.div`
  flex: 1;
  display: flex;
  flex-direction: column;
  border: 1px solid ${C.tab};
  border-top: 3px solid ${C.tab};
`;
const Canvas = styled.div`
  flex: 1;
  position: relative;
  overflow: hidden;
  min-height: 420px;
  background: #eeefe9;
`;
const MapDrawing = styled.svg`
  position: absolute;
  inset: 0;
  width: 100%;
  height: 100%;
`;
const Measure = styled.section`
  position: absolute;
  left: 8px;
  top: 8px;
  width: 268px;
  padding: 0 5px 5px 4px;
  background: ${C.face};
  border: 1px solid #c6c6c6;
`;
const Collapse = styled.button`
  position: absolute;
  left: 3px;
  top: 3px;
  width: 19px;
  height: 19px;
  display: grid;
  place-items: center;
  border: 1px solid #bdbdbd;
  border-radius: 50%;
  background: ${C.face};
`;
const MRow = styled.div`
  display: flex;
  align-items: center;
  height: ${(p) => p.$h}px;
  border-bottom: 1px solid #c9c9c9;
`;
const MTitle = styled.h2`
  flex: 1;
  padding-left: 20px;
  font-size: 14px;
`;
const MSub = styled.h3`
  flex: 1;
  padding-left: 1px;
  font-size: 13px;
`;
const MTools = styled.div`
  display: flex;
  align-items: center;
  gap: 8px;
  width: 69px;
  padding-left: 8px;
`;
const MStrong = styled.h3`
  padding: 8px 1px 4px;
  font-size: 12px;
  font-weight: 600;
  color: ${C.ink};
`;
const Pick = styled.span`
  flex: none;
  display: grid;
  width: ${(p) => p.$w}px;
  height: 22px;
  margin-right: ${(p) => p.$mr || 0}px;
  align-items: center;
  border: 1px solid ${(p) => (p.$plain ? "#fff" : "#8f8f8f")};
  background: #fff;
  select {
    grid-area: 1 / 1;
    appearance: none;
    height: 20px;
    border: 0;
    padding: 0 14px 0 ${(p) => p.$pl || 3}px;
    background: none;
    color: ${C.ink};
    font-size: ${(p) => p.$size || 12}px;
  }
  &::after {
    content: "";
    grid-area: 1 / 1;
    justify-self: end;
    margin-right: 4px;
    border: 3px solid transparent;
    border-top: 4px solid #4c4c4c;
    border-bottom: 0;
    pointer-events: none;
  }
`;
const MTable = styled.table`
  width: 256px;
  margin-left: 1px;
  border-collapse: collapse;
  table-layout: fixed;
  th, td {
    height: 22px;
    padding: 0 3px;
    border: 1px solid #8f8f8f;
    font-weight: 400;
    font-size: 11px;
    white-space: nowrap;
    background: #fff;
  }
  td { text-align: right; }
  td:nth-child(2) { background: #dfdfdf; }
  td:nth-child(3) { background: #c9c9c9; }
`;
const MPair = styled.div`
  display: flex;
  justify-content: space-between;
  padding: 0 4px 0 1px;
  height: 22px;
  line-height: 22px;
  font-size: 11px;
`;
const MPairs = styled.div`
  padding-top: 4px;
`;
const Navigator = styled.div`
  position: absolute;
  left: 16px;
  bottom: 17px;
  width: 82px;
`;
const NavTop = styled.div`
  display: flex;
  justify-content: space-between;
  align-items: flex-start;
  padding: 0 2px;
  margin-bottom: 12px;
`;
const NavToggle = styled.button`
  display: grid;
  place-items: center;
  width: 16px;
  height: 16px;
  border: 1px solid #8f8f8f;
  background: #fff;
`;
const Corner = styled.div`
  position: absolute;
  right: 6px;
  bottom: 5px;
`;
const Status = styled.div`
  display: grid;
  grid-template-columns: 1fr auto 1fr;
  align-items: center;
  height: 24px;
  padding: 0 5px;
  background: ${C.face};
`;
const Bar = styled.div`
  display: flex;
  align-items: center;
  gap: ${(p) => p.$gap || 0}px;
  justify-content: ${(p) => (p.$end ? "flex-end" : "flex-start")};
`;
const Coordinates = styled.output`
  display: flex;
  align-items: center;
  gap: 10px;
  padding-left: 38px;
  font-size: 11px;
`;
const Rule = styled.span`
  flex: none;
  width: 1px;
  height: ${(p) => p.$h || 15}px;
  margin: 0 ${(p) => p.$m || 0}px;
  background: ${(p) => p.$c || "#9a9a9a"};
`;
const OnButton = styled.button`
  display: grid;
  place-items: center;
  width: 20px;
  height: 20px;
  border: 1px solid ${C.accent};
  background: #a3cdec;
`;
const Dim = styled.button`
  display: flex;
  align-items: center;
  gap: 4px;
  font-size: 11px;
  color: #8a8a8a;
`;

const MapView = () => (
  <View>
    <TabStrip>
      <DocTab>
        <MapIcon />
        <DocName $w={26}>マップ</DocName>
        <IconButton $w={20} aria-label="閉じる"><CloseX s={11} /></IconButton>
      </DocTab>
      <IconButton $w={10} aria-label="ビュー一覧"><Chevron s={10} /></IconButton>
    </TabStrip>
    <MapFrame>
      <Canvas>
        <MapDrawing viewBox="0 0 1231 562" preserveAspectRatio="xMidYMid slice">
          <path d="M1112 0 700 442 828 562H1232V0Z" fill="#e5e5de" />
          <path d="M1112 0 700 442 828 562" fill="none" stroke="#dcdcd6" />
          <path d="M699 443 824 562" fill="none" stroke="#e3e4de" strokeWidth="4" />
          <circle cx="535" cy="268" r="6.500" fill="#e60000" stroke="#000" strokeWidth="1.300" />
          <circle cx="700" cy="442" r="6.500" fill="#005ce6" stroke="#000" strokeWidth="1.300" />
          <path d="M535 269 700 442" stroke="#fff" strokeWidth="1.300" />
          <path d="M537 271 700 442" stroke="#0000e0" strokeWidth="1.300" strokeDasharray="4 4 3 4 2 4" />
        </MapDrawing>
        <Measure>
          <MRow $h={32}>
            <MTitle>距離の計測</MTitle>
            <IconButton $w={24} aria-label="閉じる"><CloseX s={11} w={2} /></IconButton>
          </MRow>
          <MRow $h={30}>
            <MTools><Ruler s={16} /><Chevron /></MTools>
            <Pick $w={90} $mr={4} $size={11}>
              <select aria-label="計測方法" defaultValue="平面"><option>平面</option></select>
            </Pick>
            <Pick $w={90} $size={11}>
              <select aria-label="単位" defaultValue="メートル法"><option>メートル法</option></select>
            </Pick>
          </MRow>
          <MRow $h={30}>
            <MSub>結果</MSub>
            <IconButton $w={24} aria-label="結果のコピー"><Copy /></IconButton>
            <IconButton $w={24} aria-label="結果のクリア"><Eraser /></IconButton>
          </MRow>
          <MStrong>距離</MStrong>
          <MTable>
            <colgroup><col width="72" /><col width="48" /><col width="136" /></colgroup>
            <thead><tr><th>セグメント (m)</th><th>パス (m)</th><th>合計 (m)</th></tr></thead>
            <tbody><tr><td>0.12</td><td>0.12</td><td>0.12</td></tr></tbody>
          </MTable>
          <MPairs>
            <MPair><span>パス ネット方位:</span><span>318°</span></MPair>
            <MPair><span>パス ネット距離:</span><span>0.12 m</span></MPair>
          </MPairs>
        </Measure>
        <Collapse aria-label="計測の折りたたみ"><Chevron s={10} up /></Collapse>
        <Navigator>
          <NavTop>
            <NavToggle aria-label="ナビゲーター"><Chevron s={10} up /></NavToggle>
            <Ic s={8} v={8}>
              <path d="M0 0H2V2H0ZM5 0H7V2H5ZM5 5H7V7H5Z" fill="#333" stroke="none" />
            </Ic>
          </NavTop>
          <Svg width="78" height="80" viewBox="0 0 78 80" aria-hidden="true">
            <circle cx="39" cy="42" r="30.500" stroke="#f7f9fa" strokeWidth="11" />
            <circle cx="39" cy="42" r="36" stroke="#aaa" />
            <circle cx="39" cy="42" r="25" stroke="#aaa" />
            <path d="M39 2 51.500 30 39 23 26.500 30Z" fill="#fff" stroke="#8a8a8a" />
          </Svg>
        </Navigator>
        <Corner><Bookmarked /></Corner>
      </Canvas>
      <Status>
        <Bar>
          <Pick $w={100} $pl={5}>
            <select aria-label="縮尺" defaultValue="1:1.94"><option>1:1.94</option></select>
          </Pick>
          <Rule $m={4} />
          <OnButton aria-label="スナップ"><GridPlus s={16} c="#555" /></OnButton>
          <IconButton $w={20} aria-label="グリッド"><GridIcon /></IconButton>
          <IconButton $w={20} aria-label="推定"><CogoIcon /></IconButton>
          <IconButton $w={20} aria-label="制限"><SnapIcon /></IconButton>
          <IconButton $w={20} aria-label="北"><NorthIcon /></IconButton>
          <IconButton $w={18} aria-label="その他"><Chevron s={10} c="#222" /></IconButton>
          <Rule $m={4} />
        </Bar>
        <Coordinates>
          <span>137.4807577°E 36.9466806°N</span>
          <Chevron s={10} />
        </Coordinates>
        <Bar $end $gap={7}>
          <Rule />
          <Dim disabled><ZoomSel />選択フィーチャ: 0</Dim>
          <Rule />
          <IconButton aria-label="選択解除" disabled><ClearSel /></IconButton>
          <Rule />
          <IconButton aria-label="一時停止"><Pause /></IconButton>
          <Rule />
          <IconButton aria-label="更新"><Refresh /></IconButton>
        </Bar>
      </Status>
    </MapFrame>
  </View>
);

/* ---------- attribute tables ---------- */

const Tables = styled.div`
  display: grid;
  grid-template-columns: 333px minmax(0, 1fr);
  gap: 6px;
`;
const TableView = styled.section`
  min-width: 0;
`;
const TableFrame = styled.div`
  border: 1px solid ${C.tab};
  border-top: 3px solid ${C.tab};
  background: ${C.face};
  padding: 0 1px;
`;
const TableTools = styled.div`
  display: flex;
  align-items: center;
  gap: ${(p) => p.$gap || 0}px;
  height: 30px;
  padding: 0 6px 0 ${(p) => p.$pl || 2}px;
  margin-bottom: 1px;
  border: 1px solid #c4c5c9;
  background: #eef0f2;
  white-space: nowrap;
`;
const Spacer = styled.span`
  flex: 1;
`;
const ToolName = styled.span`
  font-weight: 600;
  font-size: 11px;
  color: ${C.ink};
`;
const Tool = styled.button`
  display: flex;
  align-items: center;
  gap: 4px;
  font-size: 11px;
  color: ${C.ink};
  &:disabled { color: #b9b9b9; }
`;
const GridBox = styled.div`
  display: grid;
  grid-template-columns: 1fr 17px;
  grid-template-rows: 153px 17px;
  border: 1px solid #c4c4c4;
  background: #fff;
`;
const Scroll = styled.div`
  display: flex;
  flex-direction: ${(p) => (p.$v ? "column" : "row")};
  align-items: center;
  justify-content: space-between;
  padding: 4px;
  background: #f2f2f2;
`;
const ScrollEnd = styled.div`
  background: #e8e8e8;
`;
const Data = styled.table`
  width: 293px;
  border-collapse: separate;
  border-spacing: 0;
  table-layout: fixed;
  th, td {
    height: 24px;
    padding: 0 4px;
    border-right: 1px solid #c6c6c6;
    border-bottom: 1px solid #c6c6c6;
    font-weight: 400;
    font-size: 11px;
    line-height: 14px;
    text-align: left;
    white-space: nowrap;
  }
  thead th { height: 23px; background: #ebebeb; color: ${C.ink}; }
  thead th:last-child { border-right: 0; }
`;
const Corner0 = styled.th`
  && { background: #fff; padding: 0 2px; vertical-align: bottom; }
`;
const LonHead = styled.th`
  && { background: #c7e2f5; border-bottom: 2px solid ${C.accent}; }
`;
const RowHead = styled.th`
  && {
    background: ${(p) => (p.$on ? "#c7e2f5" : "#ebebeb")};
    ${(p) => p.$on && css`border-right: 2px solid ${C.accent};`}
  }
`;
const Row = styled.tr`
  background: ${(p) => (p.$alt ? "#ebebeb" : "#fff")};
`;
const Num = styled.td`
  && {
    text-align: right;
    padding: 0 3px 0 0;
    ${(p) => p.$on && css`background: #c7e2f5;`}
  }
`;
const Foot = styled.div`
  display: flex;
  align-items: center;
  height: 28px;
  overflow: hidden;
  white-space: nowrap;
`;
const FootView = styled.button`
  flex: none;
  display: grid;
  place-items: center;
  width: ${(p) => (p.$on ? 32 : 36)}px;
  height: 22px;
  border: 1px solid ${(p) => (p.$on ? "#3aa5e0" : "transparent")};
  background: ${(p) => (p.$on ? "#c3c5c9" : "none")};
`;
const FootText = styled.span`
  padding-left: 6px;
  font-size: 11px;
`;
const FilterLabel = styled.span`
  padding: 0 5px 0 9px;
  font-size: 11px;
  color: ${C.ink};
`;
const FilterBox = styled.span`
  flex: none;
  display: flex;
  align-items: center;
  justify-content: space-around;
  width: 42px;
  height: 24px;
  background: #eef0f2;
`;
const Slider = styled.input.attrs({ type: "range" })`
  appearance: none;
  width: 100px;
  height: 12px;
  margin: 0 5px;
  background: none;
  &::-webkit-slider-runnable-track {
    height: 3px;
    background: linear-gradient(90deg, #6b6b6b 50%, #dcdcdc 50%);
  }
  &::-webkit-slider-thumb {
    appearance: none;
    width: 3px;
    height: 11px;
    margin-top: -4px;
    background: #4c4c4c;
  }
`;

const Attr = ({ name, rows, selected, tools, toolGap, toolPad, children, stepDim, tabW }) => (
  <TableView>
    <TabStrip>
      <DocTab>
        <TableIcon />
        <DocName $w={tabW}>{name}</DocName>
        <IconButton $w={20} aria-label="閉じる"><CloseX s={11} /></IconButton>
      </DocTab>
      <IconButton $w={10} aria-label="テーブル一覧"><Chevron s={10} /></IconButton>
    </TabStrip>
    <TableFrame>
      <TableTools $gap={toolGap} $pl={toolPad}>
        {tools}
        <Spacer />
        <IconButton aria-label="メニュー"><Burger /></IconButton>
      </TableTools>
      <GridBox>
        <div>
          <Data>
            <colgroup>
              <col width="17" /><col width="66" /><col width="50" /><col width="83" /><col width="77" />
            </colgroup>
            <thead>
              <tr>
                <Corner0 aria-label="すべて選択">
                  <Ic s={12} v={12}><path d="M11 1V11H1Z" fill="#c9c9c9" stroke="none" /></Ic>
                </Corner0>
                <th>OBJECTID *</th>
                <th>SHAPE *</th>
                <LonHead>Lon</LonHead>
                <th>Lat</th>
              </tr>
            </thead>
            <tbody>
              {rows.map(([lon, lat], i) => (
                <Row key={i} $alt={i % 2 === 1}>
                  <RowHead $on={selected === i}>{i + 1}</RowHead>
                  <td>{i + 1}</td>
                  <td>ポイント</td>
                  <Num $on={selected === i}>{lon}</Num>
                  <Num>{lat}</Num>
                </Row>
              ))}
              <Row>
                <RowHead />
                <td colSpan="4">クリックして、新しい行を追加します。</td>
              </Row>
            </tbody>
          </Data>
        </div>
        <Scroll $v><Chevron up c="#bbb" /><Chevron c="#bbb" /></Scroll>
        <Scroll>
          <Ic s={8} v={8} c="#bbb"><path d="M5.500 1 2.500 4 5.500 7" strokeWidth="1.300" /></Ic>
          <Ic s={8} v={8} c="#bbb"><path d="M2.500 1 5.500 4 2.500 7" strokeWidth="1.300" /></Ic>
        </Scroll>
        <ScrollEnd />
      </GridBox>
      <Foot>
        <FootView $on aria-label="すべて表示"><ViewAll /></FootView>
        <FootView aria-label="選択を表示"><ViewSel /></FootView>
        <IconButton $w={22} aria-label="先頭"><Step dim={stepDim} /></IconButton>
        <IconButton $w={24} aria-label="末尾"><Step end /></IconButton>
        <FootText>0/4 が選択されました</FootText>
        {children}
      </Foot>
    </TableFrame>
  </TableView>
);

const iconTools = (
  <>
    <IconButton $w={26} aria-label="フィールドの追加"><FieldAdd /></IconButton>
    <IconButton $w={26} aria-label="フィールド演算"><FieldCalc /></IconButton>
    <Rule $h={22} $c="#cfcfcf" $m={4} />
    <IconButton $w={26} aria-label="属性条件で選択"><SelByAttr /></IconButton>
    <IconButton $w={26} aria-label="ズーム" disabled><ZoomSel /></IconButton>
    <IconButton $w={26} aria-label="切り替え"><Switch /></IconButton>
    <IconButton $w={26} aria-label="解除" disabled><ClearRows /></IconButton>
    <IconButton $w={26} aria-label="削除" disabled><DeleteRows /></IconButton>
    <IconButton $w={26} aria-label="コピー" disabled><CopyRows /></IconButton>
  </>
);
const namedTools = (
  <>
    <ToolName>フィールド:</ToolName>
    <Tool><FieldAdd />追加</Tool>
    <Tool><FieldCalc />計算</Tool>
    <Rule $h={22} $c="#cfcfcf" />
    <ToolName>選択セット:</ToolName>
    <Tool><SelByAttr />属性条件で選択</Tool>
    <Tool disabled><ZoomSel />ズーム</Tool>
    <Tool><Switch />切り替え</Tool>
    <Tool disabled><ClearRows />解除</Tool>
    <Tool disabled><DeleteRows />削除</Tool>
    <Tool disabled><CopyRows />コピー</Tool>
  </>
);

const leftRows = [
  ["137.426972589", "36.90605284"],
  ["137.492256246", "36.94340823"],
  ["137.085745981", "36.751283282"],
  ["136.766498886", "36.161717349"],
];
const rightRows = [
  ["137.426971755", "36.90605357"],
  ["137.480753965", "36.946679422"],
  ["137.085745573", "36.751283697"],
  ["136.766498886", "36.161717349"],
];

/* ---------- catalog ---------- */

const CatTabs = styled.div`
  display: flex;
  align-items: center;
  gap: 9px;
  height: 22px;
  padding: 0 7px 0 6px;
  margin-bottom: 9px;
`;
const CatTab = styled.button`
  height: 22px;
  font-size: 11px;
  line-height: 19px;
  border-bottom: 2px solid ${(p) => (p.$on ? C.accent : "transparent")};
  font-weight: ${(p) => (p.$on ? 600 : 400)};
  color: ${(p) => (p.$on ? C.ink : C.text)};
`;
const SquareButton = styled.button`
  display: grid;
  place-items: center;
  width: ${(p) => p.$w}px;
  height: 24px;
  border: 1px solid ${(p) => (p.disabled ? "#cfcfcf" : "#8f8f8f")};
  border-right: 0;
`;
const CatTree = styled.ul`
  list-style: none;
  margin: 7px 0 0;
  padding: 0;
`;
const CatItem = styled.li`
  display: flex;
  align-items: center;
  height: 24px;
  gap: 7px;
  padding-left: 11px;
  font-size: 11px;
`;
const CatColumn = styled.div`
  display: flex;
  flex-direction: column;
`;
const BottomTabs = styled.div`
  display: flex;
  height: 21px;
`;
const BottomTab = styled.button`
  width: ${(p) => (p.$on ? 36 : 34)}px;
  padding-left: ${(p) => (p.$on ? 5 : 6)}px;
  text-align: left;
  font-size: 11px;
  line-height: 18px;
  color: ${(p) => (p.$on ? C.accent : C.text)};
  ${(p) =>
    p.$on &&
    css`
      margin-top: -1px;
      background: ${C.face};
      border: 1px solid ${C.accent};
      border-top: 0;
      border-radius: 0 0 3px 3px;
    `}
`;

const catalog = [
  ["マップ", FolderMap],
  ["ツールボックス", FolderTool],
  ["データベース", FolderDb],
  ["レイアウト", FolderLayout],
  ["スタイル", FolderStyle],
  ["サーバー", FolderServer],
  ["フォルダー", FolderGo],
  ["ロケーター", FolderLoc],
];
const dock = ["カ...", "フ...", "ジ...", "シ...", "フ...", "履...", "ラ...", "ラ...", "登...", "場..."];

const Catalog = () => (
  <CatColumn>
    <Panel $active>
      <Heading title="カタログ" active />
      <CatTabs>
        {["プロジェクト", "ポータル", "コンピューター", "お気に入り"].map((t, i) => (
          <CatTab key={t} $on={i === 0}>{t}</CatTab>
        ))}
        <Spacer />
        <IconButton aria-label="メニュー"><Burger /></IconButton>
      </CatTabs>
      <SearchRow $r={5} $l={2}>
        <IconButton $w={24} aria-label="戻る" disabled><BackCircle /></IconButton>
        <SquareButton $w={20} aria-label="ホーム" disabled><HomeIcon /></SquareButton>
        <SquareButton $w={23} aria-label="フィルター"><Funnel hollow /></SquareButton>
        <SearchBox>
          <BareInput $size={11} placeholder="プロジェクト の検索" aria-label="プロジェクトの検索" />
          <Lens />
          <Chevron s={10} />
        </SearchBox>
      </SearchRow>
      <CatTree>
        {catalog.map(([t, Icon]) => (
          <CatItem key={t}><Expand /><Icon />{t}</CatItem>
        ))}
      </CatTree>
    </Panel>
    <BottomTabs>
      {dock.map((t, i) => (
        <BottomTab key={i} $on={i === 0}>{t}</BottomTab>
      ))}
    </BottomTabs>
  </CatColumn>
);

export default function App() {
  return (
    <App_>
      <Global />
      <Top />
      <Body>
        <Column>
          <Contents />
          <Panel $h={264}>
            <Heading title="ポップアップ" />
            <PopupMessage>Explore ツールでビュー内のアイテムを選択します。</PopupMessage>
          </Panel>
        </Column>
        <Column>
          <MapView />
          <Tables>
            <Attr name="NotoJGD2011" tabW={71} rows={leftRows} selected={1} tools={iconTools}>
              <FilterLabel>フィルター:</FilterLabel>
              <FilterBox><ClockIcon /><SlidersIcon /></FilterBox>
            </Attr>
            <Attr name="JGD_2011_Noto2024" tabW={105} rows={rightRows} selected={0} tools={namedTools} toolGap={8} toolPad={4} stepDim>
              <Spacer />
              <FilterLabel>フィルター:</FilterLabel>
              <FilterBox><ClockIcon /><SlidersIcon /></FilterBox>
              <IconButton $w={20} aria-label="範囲でフィルター"><FunnelSel /></IconButton>
              <Rule />
              <IconButton $w={24} aria-label="並べ替え" disabled><UpDown /></IconButton>
              <IconButton $w={16} aria-label="縮小"><Ic s={8} v={8} c="#4c4c4c"><path d="M1 4H7" strokeWidth="2" /></Ic></IconButton>
              <Slider aria-label="拡大率" defaultValue="50" />
              <IconButton $w={16} aria-label="拡大"><Ic s={8} v={8} c="#4c4c4c"><path d="M0 4H8M4 0V8" strokeWidth="1.600" /></Ic></IconButton>
              <Pick $w={60} $plain $mr={6} $pl={4}>
                <select aria-label="倍率" defaultValue="100%"><option>100%</option></select>
              </Pick>
              <Rule />
              <IconButton $w={26} aria-label="更新"><Refresh /></IconButton>
            </Attr>
          </Tables>
        </Column>
        <Catalog />
      </Body>
    </App_>
  );
}
